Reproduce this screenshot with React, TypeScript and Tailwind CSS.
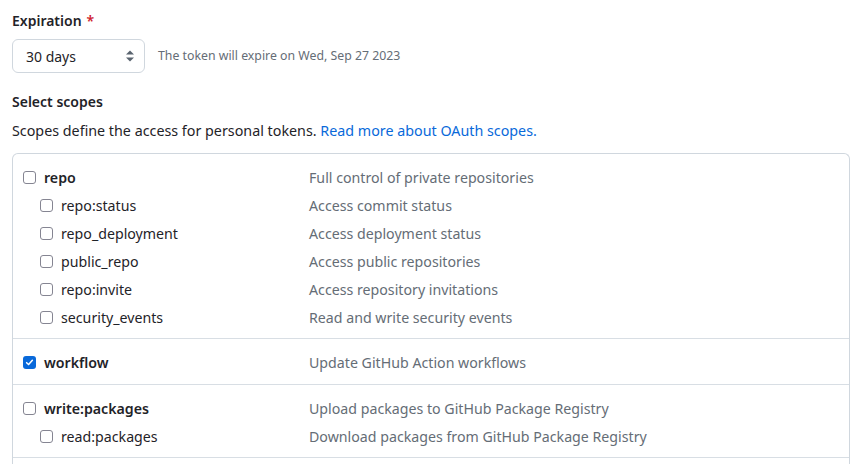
import React from "react";

type Item = { name: string; desc: string; checked?: boolean; child?: boolean };

const groups: Item[][] = [
  [
    { name: "repo", desc: "Full control of private repositories" },
    { name: "repo:status", desc: "Access commit status", child: true },
    { name: "repo_deployment", desc: "Access deployment status", child: true },
    { name: "public_repo", desc: "Access public repositories", child: true },
    { name: "repo:invite", desc: "Access repository invitations", child: true },
    { name: "security_events", desc: "Read and write security events", child: true },
  ],
  [{ name: "workflow", desc: "Update GitHub Action workflows", checked: true }],
  [
    { name: "write:packages", desc: "Upload packages to GitHub Package Registry" },
    { name: "read:packages", desc: "Download packages from GitHub Package Registry", child: true },
  ],
];

function Box({ checked }: { checked?: boolean }) {
  if (checked) {
    return (
      <span className="flex h-[13px] w-[13px] items-center justify-center rounded-[3px] bg-[#0969da]">
        <svg width="9" height="9" viewBox="0 0 10 10" fill="none">
          <path d="M1.8 5.2 L4 7.3 L8.2 2.6" stroke="white" strokeWidth="1.7" strokeLinecap="round" strokeLinejoin="round" />
        </svg>
      </span>
    );
  }
  return <span className="block h-[13px] w-[13px] rounded-[3px] border-[1.5px] border-[#858592] bg-white" />;
}

export default function App() {
  return (
    <div className="h-[464px] w-[867px] overflow-hidden bg-white pl-3 pt-[11px] text-[#1f2328]" style={{ fontFamily: '"Noto Sans", "Segoe UI", sans-serif' }}>
      <div className="flex items-center text-[14px] font-semibold leading-[20px]">
        Expiration <span className="ml-[5px] text-[#cf222e]">*</span>
      </div>
      <div className="mt-[8px] flex items-center">
        <div className="flex h-[34px] w-[133px] items-center justify-between rounded-[6px] border border-[#d0d7de] bg-white pl-[13px] pr-[9px] text-[14px]">
          <span>30 days</span>
          <svg width="10" height="14" viewBox="0 0 10 14">
            <path d="M1 5.5 L5 1.5 L9 5.5 Z" fill="#59636e" />
            <path d="M1 8.5 L5 12.5 L9 8.5 Z" fill="#59636e" />
          </svg>
        </div>
        <span className="ml-[13px] pt-[1px] text-[12.3px] text-[#656d76]">The token will expire on Wed, Sep 27 2023</span>
      </div>
      <div className="mt-[19px] text-[14px] font-semibold leading-[20px]">Select scopes</div>
      <div className="mt-[9px] text-[14.3px] leading-[20px]">
        Scopes define the access for personal tokens.{" "}
        <span className="text-[#0969da]">Read more about OAuth scopes.</span>
      </div>
      <div className="mt-[12px] w-[838px] rounded-t-[6px] border border-b-0 border-[#d0d7de]">
        {groups.map((g, gi) => (
          <div key={gi} className={`pt-[10px] ${gi === 1 ? "pb-[7px]" : "pb-[6px]"} ${gi > 0 ? "border-t border-[#d8dee4]" : ""}`}>
            {g.map((it) => (
              <div key={it.name} className="flex h-[28px] items-center text-[14.2px]">
                <div className={`flex w-[296px] items-center ${it.child ? "pl-[27px]" : "pl-[10px]"}`}>
                  <Box checked={it.checked} />
                  <span className={`ml-[8px] ${it.child ? "" : "font-semibold"}`}>{it.name}</span>
                </div>
                <span className="text-[#656d76]">{it.desc}</span>
              </div>
            ))}
          </div>
        ))}
        <div className="h-[40px] border-t border-[#d8dee4]" />
      </div>
    </div>
  );
}
